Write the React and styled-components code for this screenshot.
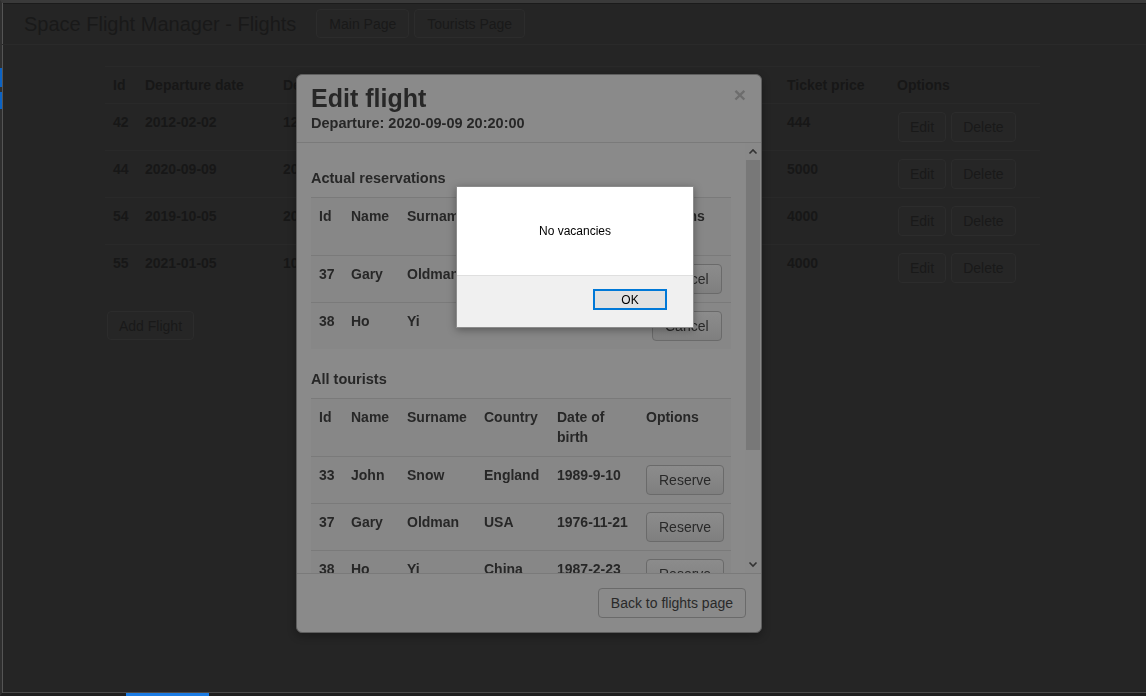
import React from 'react';
import styled, { createGlobalStyle } from 'styled-components';

const flights = [
    { id: 42, depDate: '2012-02-02', depTime: '12:00:00', arrDate: '2012-02-03', arrTime: '12:00:00', seats: 3, price: 444 },
    { id: 44, depDate: '2020-09-09', depTime: '20:20:00', arrDate: '2020-09-10', arrTime: '10:00:00', seats: 2, price: 5000 },
    { id: 54, depDate: '2019-10-05', depTime: '20:00:00', arrDate: '2019-10-06', arrTime: '08:00:00', seats: 4, price: 4000 },
    { id: 55, depDate: '2021-01-05', depTime: '10:00:00', arrDate: '2021-01-06', arrTime: '10:00:00', seats: 4, price: 4000 },
];

const reservations = [
    { id: 37, name: 'Gary', surname: 'Oldman', country: 'USA', birth: '1976-11-21' },
    { id: 38, name: 'Ho', surname: 'Yi', country: 'China', birth: '1987-2-23' },
];

const tourists = [
    { id: 33, name: 'John', surname: 'Snow', country: 'England', birth: '1989-9-10' },
    { id: 37, name: 'Gary', surname: 'Oldman', country: 'USA', birth: '1976-11-21' },
    { id: 38, name: 'Ho', surname: 'Yi', country: 'China', birth: '1987-2-23' },
];

const mainCols = [32, 138, 126, 126, 126, 126, 110, 151];
const reservationCols = [32, 56, 77, 73, 95, 87];
const touristCols = [32, 56, 77, 73, 89, 93];

const Chevron = ({ up }) => (
    <svg width="16" height="17" viewBox="0 0 16 17">
        <path
            d={up ? 'M4.5 10.5 L8 7 L11.5 10.5' : 'M4.5 6.5 L8 10 L11.5 6.5'}
            fill="none"
            stroke="#333"
            strokeWidth="1.6"
        />
    </svg>
);

class App extends React.Component {
    renderModalTable(cols, rows, action) {
        return (
            <ModalTable>
                <colgroup>
                    {cols.map((w, i) => <col key={i} style={{ width: w }} />)}
                </colgroup>
                <thead>
                    <tr>
                        <Th $modal>Id</Th>
                        <Th $modal>Name</Th>
                        <Th $modal>Surname</Th>
                        <Th $modal>Country</Th>
                        <Th $modal>Date of birth</Th>
                        <Th $modal>Options</Th>
                    </tr>
                </thead>
                <tbody>
                    {rows.map(t => (
                        <Row key={t.id} $modal>
                            <Td>{t.id}</Td>
                            <Td>{t.name}</Td>
                            <Td>{t.surname}</Td>
                            <Td>{t.country}</Td>
                            <Td>{t.birth}</Td>
                            <Td><ModalButton $shaded>{action}</ModalButton></Td>
                        </Row>
                    ))}
                </tbody>
            </ModalTable>
        );
    }

    render() {
        return (
            <React.Fragment>
                <GlobalStyle />
                <Window>
                    <SideMark $top={65} $height={19} />
                    <SideMark $top={89} $height={17} />
                    <TopBar>
                        <PageTitle>Space Flight Manager - Flights</PageTitle>
                        <PageButton>Main Page</PageButton>
                        <PageButton>Tourists Page</PageButton>
                    </TopBar>
                    <Content>
                        <FlightTable>
                            <colgroup>
                                {mainCols.map((w, i) => <col key={i} style={{ width: w }} />)}
                            </colgroup>
                            <thead>
                                <tr>
                                    <Th>Id</Th>
                                    <Th>Departure date</Th>
                                    <Th>Departure time</Th>
                                    <Th>Arrival date</Th>
                                    <Th>Arrival time</Th>
                                    <Th>Seats</Th>
                                    <Th>Ticket price</Th>
                                    <Th>Options</Th>
                                </tr>
                            </thead>
                            <tbody>
                                {flights.map(f => (
                                    <Row key={f.id}>
                                        <Td>{f.id}</Td>
                                        <Td>{f.depDate}</Td>
                                        <Td>{f.depTime}</Td>
                                        <Td>{f.arrDate}</Td>
                                        <Td>{f.arrTime}</Td>
                                        <Td>{f.seats}</Td>
                                        <Td>{f.price}</Td>
                                        <Td>
                                            <Actions>
                                                <PageButton $small>Edit</PageButton>
                                                <PageButton $small>Delete</PageButton>
                                            </Actions>
                                        </Td>
                                    </Row>
                                ))}
                            </tbody>
                        </FlightTable>
                        <AddButton>Add Flight</AddButton>
                    </Content>
                    <TaskIndicator />
                </Window>

                <Modal>
                    <ModalHeader>
                        <div>
                            <ModalTitle>Edit flight</ModalTitle>
                            <ModalSubtitle>Departure: 2020-09-09 20:20:00</ModalSubtitle>
                        </div>
                        <Close>×</Close>
                    </ModalHeader>
                    <ModalBody>
                        <BodyContent>
                            <SectionTitle>Actual reservations</SectionTitle>
                            {this.renderModalTable(reservationCols, reservations, 'Cancel')}
                            <SectionTitle>All tourists</SectionTitle>
                            {this.renderModalTable(touristCols, tourists, 'Reserve')}
                        </BodyContent>
                        <ScrollRail>
                            <ScrollArrow><Chevron up /></ScrollArrow>
                            <ScrollThumb />
                            <ScrollTrack />
                            <ScrollArrow><Chevron /></ScrollArrow>
                        </ScrollRail>
                    </ModalBody>
                    <ModalFooter>
                        <ModalButton>Back to flights page</ModalButton>
                    </ModalFooter>
                </Modal>

                <Dialog>
                    <DialogMessage>No vacancies</DialogMessage>
                    <DialogFooter>
                        <OkButton>OK</OkButton>
                    </DialogFooter>
                </Dialog>
            </React.Fragment>
        );
    }
}

const GlobalStyle = createGlobalStyle`
    html, body {
        margin: 0;
        height: 100%;
        overflow: hidden;
        background: #252525;
    }
    body {
        font-family: "Liberation Sans", Arial, sans-serif;
        font-size: 14px;
        line-height: 20px;
        color: #171717;
    }
`;

const Window = styled.div`
    position: relative;
    box-sizing: border-box;
    height: 100vh;
    border-top: 3px solid #3a3a3a;
    border-left: 2px solid #2f2f2f;
    border-bottom: 3px solid #1f1f1f;
    box-shadow: inset 1px 0 0 #555, inset 0 1px 0 #1b1b1b, inset 0 -1px 0 #4a4a4a;
`;

const SideMark = styled.div`
    position: absolute;
    left: -2px;
    top: ${p => p.$top}px;
    width: 2px;
    height: ${p => p.$height}px;
    background: #0b63c5;
`;

const TaskIndicator = styled.div`
    position: absolute;
    left: 124px;
    bottom: -3px;
    width: 83px;
    height: 3px;
    background: #1a7be3;
`;

const TopBar = styled.header`
    display: flex;
    align-items: center;
    height: 41px;
    padding-left: 22px;
    border-bottom: 1px solid #2a2a2a;
`;

const PageTitle = styled.h1`
    margin: 0 20px 0 0;
    font-size: 20px;
    font-weight: normal;
    color: #191919;
`;

const PageButton = styled.button`
    box-sizing: border-box;
    height: ${p => (p.$small ? 30 : 29)}px;
    padding: 0 ${p => (p.$small ? 11 : 12)}px;
    margin-right: ${p => (p.$small ? 0 : 5)}px;
    border: 1px solid #2c2c2c;
    border-radius: 4px;
    background: #262626;
    font-family: inherit;
    font-size: 14px;
    color: #191919;
`;

const AddButton = styled(PageButton)`
    margin: 20px 0 0 2px;
    padding: 0 11px;
`;

const Content = styled.main`
    padding: 21px 0 0 103px;
`;

const FlightTable = styled.table`
    width: 935px;
    table-layout: fixed;
    border-collapse: collapse;
    border-top: 1px solid #292929;
`;

const Th = styled.th`
    padding: ${p => (p.$modal ? '8px 8px 9px' : '8px')};
    text-align: left;
    vertical-align: top;
    font-weight: bold;
    color: ${p => (p.$modal ? '#272727' : '#171717')};
`;

const Row = styled.tr`
    border-top: 1px solid ${p => (p.$modal ? '#7a7a7a' : '#292929')};
`;

const Td = styled.td`
    padding: 8px;
    vertical-align: top;
    font-weight: bold;
    white-space: nowrap;
    overflow: hidden;
`;

const Actions = styled.div`
    display: flex;
    gap: 5px;
    margin-left: 1px;
`;

const Modal = styled.div`
    position: fixed;
    left: 296px;
    top: 74px;
    box-sizing: border-box;
    width: 466px;
    height: 559px;
    display: flex;
    flex-direction: column;
    background: #8a8a8a;
    border: 1px solid #5e5e5e;
    border-radius: 6px;
    box-shadow: 0 3px 9px rgba(0, 0, 0, 0.3);
    color: #272727;
    overflow: hidden;
`;

const ModalHeader = styled.div`
    display: flex;
    justify-content: space-between;
    align-items: flex-start;
    padding: 9px 15px 9px 14px;
    border-bottom: 1px solid #7a7a7a;
`;

const ModalTitle = styled.h2`
    margin: 0;
    font-size: 25px;
    line-height: 28px;
    font-weight: bold;
    color: #272727;
`;

const ModalSubtitle = styled.h5`
    margin: 1px 0 0;
    font-size: 14.5px;
    line-height: 20px;
    font-weight: bold;
    color: #272727;
`;

const Close = styled.span`
    margin-top: 0;
    font-size: 21px;
    line-height: 21px;
    font-weight: bold;
    color: #6d6d6d;
`;

const ModalBody = styled.div`
    flex: 1;
    min-height: 0;
    display: flex;
`;

const BodyContent = styled.div`
    flex: 1;
    overflow: hidden;
    padding: 5px 14px 0;
`;

const ScrollRail = styled.div`
    width: 16px;
    display: flex;
    flex-direction: column;
    background: #898989;
`;

const ScrollArrow = styled.div`
    height: 17px;
    display: flex;
    align-items: center;
    justify-content: center;
`;

const ScrollThumb = styled.div`
    height: 290px;
    margin: 0 1px;
    background: #787878;
`;

const ScrollTrack = styled.div`
    flex: 1;
`;

const SectionTitle = styled.h4`
    margin: 20px 0 9px;
    font-size: 14.5px;
    line-height: 20px;
    font-weight: bold;
    color: #272727;
`;

const ModalTable = styled.table`
    width: 420px;
    table-layout: fixed;
    border-collapse: collapse;
    border-top: 1px solid #7a7a7a;
    background: #878787;
    color: #272727;
`;

const ModalButton = styled.button`
    box-sizing: border-box;
    height: 30px;
    padding: 0 12px;
    border: 1px solid #6a6a6a;
    border-radius: 4px;
    background: ${p => (p.$shaded ? 'linear-gradient(#8c8c8c, #7f7f7f)' : '#8a8a8a')};
    font-family: inherit;
    font-size: 14px;
    color: #292929;
`;

const ModalFooter = styled.div`
    display: flex;
    justify-content: flex-end;
    padding: 14px 15px 14px;
    border-top: 1px solid #7a7a7a;
`;

const Dialog = styled.div`
    position: fixed;
    left: 456px;
    top: 186px;
    box-sizing: border-box;
    width: 238px;
    height: 142px;
    display: flex;
    flex-direction: column;
    background: #fff;
    border: 1px solid #8c8c8c;
    box-shadow: 0 2px 8px rgba(0, 0, 0, 0.35);
    font-family: "Liberation Sans", Arial, sans-serif;
`;

const DialogMessage = styled.div`
    flex: 1;
    display: flex;
    align-items: center;
    justify-content: center;
    font-size: 12px;
    color: #000;
`;

const DialogFooter = styled.div`
    box-sizing: border-box;
    height: 52px;
    display: flex;
    justify-content: flex-end;
    align-items: flex-start;
    padding: 13px 26px 0 0;
    background: #f0f0f0;
    border-top: 1px solid #dfdfdf;
`;

const OkButton = styled.button`
    box-sizing: border-box;
    width: 74px;
    height: 21px;
    padding: 0;
    border: 2px solid #0078d7;
    background: #e1e1e1;
    font-family: inherit;
    font-size: 12px;
    color: #000;
`;

export default App;
